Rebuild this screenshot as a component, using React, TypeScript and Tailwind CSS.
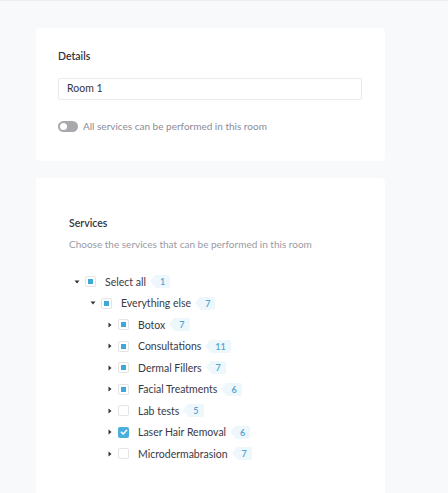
import React from "react";

type Node = { label: string; count: number; state: "none" | "partial" | "checked"; level: number; open?: boolean };

const rows: Node[] = [
  { label: "Select all", count: 1, state: "partial", level: 0, open: true },
  { label: "Everything else", count: 7, state: "partial", level: 1, open: true },
  { label: "Botox", count: 7, state: "partial", level: 2 },
  { label: "Consultations", count: 11, state: "partial", level: 2 },
  { label: "Dermal Fillers", count: 7, state: "partial", level: 2 },
  { label: "Facial Treatments", count: 6, state: "partial", level: 2 },
  { label: "Lab tests", count: 5, state: "none", level: 2 },
  { label: "Laser Hair Removal", count: 6, state: "checked", level: 2 },
  { label: "Microdermabrasion", count: 7, state: "none", level: 2 },
];

function Caret({ open }: { open?: boolean }) {
  return (
    <svg width="6" height="6" viewBox="0 0 6 6" className="shrink-0">
      {open ? <path d="M0.5 1.5 L5.5 1.5 L3 4.5 Z" fill="#333" /> : <path d="M1.5 0.5 L4.5 3 L1.5 5.5 Z" fill="#333" />}
    </svg>
  );
}

function Box({ state }: { state: Node["state"] }) {
  if (state === "checked") {
    return (
      <div className="w-[11px] h-[11px] rounded-[2px] bg-[#4bafdb] flex items-center justify-center shrink-0">
        <svg width="8" height="8" viewBox="0 0 8 8">
          <path d="M1.3 4.2 L3.2 6 L6.7 2.2" stroke="#fff" strokeWidth="1.4" fill="none" strokeLinecap="round" strokeLinejoin="round" />
        </svg>
      </div>
    );
  }
  return (
    <div className="w-[11px] h-[11px] rounded-[2px] border border-[#e3e4e8] bg-white flex items-center justify-center shrink-0">
      {state === "partial" && <div className="w-[5px] h-[5px] bg-[#3ea8d6]" />}
    </div>
  );
}

function Badge({ n }: { n: number }) {
  return (
    <div className="relative ml-[9px] h-[13px] flex items-center">
      <div className="absolute left-[-5px] top-0 w-0 h-0 border-y-[6.5px] border-y-transparent border-r-[5px] border-r-[#eef7fc]" />
      <div className="h-[13px] px-[5px] bg-[#eef7fc] text-[#4aa5d2] text-[9px] leading-[13px] font-semibold rounded-r-[2px]">{n}</div>
    </div>
  );
}

export default function App() {
  return (
    <div
      className="w-[448px] h-[493px] bg-[#f8f9fb] border-t border-[#eceef1] overflow-hidden"
      style={{ fontFamily: "Lato, 'Noto Sans', sans-serif" }}
    >
      <div className="ml-[36px] mt-[27px] w-[349px]">
        <div className="bg-white rounded-[4px] h-[133px] px-[22px] pt-[21px]">
          <div className="text-[10.5px] font-semibold text-[#33333d] leading-[14px]">Details</div>
          <div className="mt-[15px] w-[304px] h-[22px] border border-[#e9eaed] rounded-[2px] flex items-center px-[8px] text-[10.5px] text-[#33333d]">
            Room 1
          </div>
          <div className="mt-[19px] flex items-center">
            <div className="w-[20px] h-[11px] rounded-full bg-[#a9a9ad] relative">
              <div className="absolute left-[2px] top-[2px] w-[7px] h-[7px] rounded-full bg-white" />
            </div>
            <div className="ml-[5px] text-[10px] text-[#8c8c96] leading-[14px]">All services can be performed in this room</div>
          </div>
        </div>
        <div className="mt-[17px] bg-white rounded-[4px] h-[340px] px-[33px] pt-[38px]">
          <div className="text-[10.5px] font-semibold text-[#33333d] leading-[14px]">Services</div>
          <div className="mt-[7px] text-[10px] text-[#9a9aa4] leading-[14px]">Choose the services that can be performed in this room</div>
          <div className="mt-[20px] ml-[5px] flex flex-col">
            {rows.map((r) => (
              <div
                key={r.label}
                className={
                  "h-[21.5px] flex items-center " +
                  (r.level === 0 ? "pl-0" : r.level === 1 ? "pl-[16px]" : "pl-[33px]")
                }
              >
                <Caret open={r.open} />
                <div className="ml-[5px]">
                  <Box state={r.state} />
                </div>
                <div className="ml-[9px] text-[10.5px] text-[#3a3a44] leading-[14px]">{r.label}</div>
                <Badge n={r.count} />
              </div>
            ))}
          </div>
        </div>
      </div>
    </div>
  );
}
